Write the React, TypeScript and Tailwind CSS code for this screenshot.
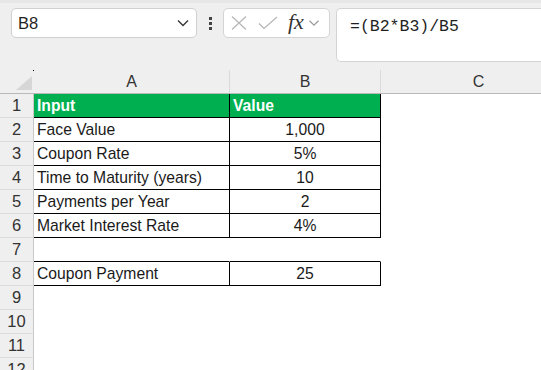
import React from "react";

const rows: { a: string; b: string; kind: "head" | "body" | "empty" | "none" }[] = [
  { a: "Input", b: "Value", kind: "head" },
  { a: "Face Value", b: "1,000", kind: "body" },
  { a: "Coupon Rate", b: "5%", kind: "body" },
  { a: "Time to Maturity (years)", b: "10", kind: "body" },
  { a: "Payments per Year", b: "2", kind: "body" },
  { a: "Market Interest Rate", b: "4%", kind: "body" },
  { a: "", b: "", kind: "empty" },
  { a: "Coupon Payment", b: "25", kind: "body" },
  { a: "", b: "", kind: "none" },
  { a: "", b: "", kind: "none" },
  { a: "", b: "", kind: "none" },
  { a: "", b: "", kind: "none" },
];

function Chevron({ className = "" }: { className?: string }) {
  return (
    <svg width="12" height="8" viewBox="0 0 12 8" className={className}>
      <path d="M1 1.5 L6 6.5 L11 1.5" fill="none" stroke="currentColor" strokeWidth="1.3" />
    </svg>
  );
}

export default function App() {
  return (
    <div
      className="w-[541px] h-[370px] overflow-hidden bg-white text-[#1a1a1a]"
      style={{ fontFamily: '"Liberation Sans", Arial, sans-serif' }}
    >
      {/* toolbar */}
      <div className="h-[70px] bg-[#efefef] border-t-[3px] border-[#e7e7e7] pt-[5px] flex items-start">
        <div className="ml-[11px] w-[186px] h-[30px] bg-white border border-[#d0d0d0] rounded-[5px] flex items-center pl-[6px] pr-[7px]">
          <span className="text-[16.5px] text-[#1f1f1f] flex-1">B8</span>
          <Chevron className="text-[#333]" />
        </div>
        <div className="w-[26px] h-[30px] flex flex-col items-center justify-center gap-[2px]">
          <div className="w-[3px] h-[3px] bg-[#444]" />
          <div className="w-[3px] h-[3px] bg-[#444]" />
          <div className="w-[3px] h-[3px] bg-[#444]" />
        </div>
        <div className="w-[107px] h-[30px] bg-white border border-[#d4d4d4] rounded-[5px] flex items-center pl-[6px]">
          <svg width="18" height="16" viewBox="0 0 18 16">
            <path d="M2 1.5 L16 14.5 M16 1.5 L2 14.5" stroke="#b5b5b5" strokeWidth="1.2" fill="none" />
          </svg>
          <svg width="22" height="16" viewBox="0 0 22 16" className="ml-[9px]">
            <path d="M2 8.5 L7 13.5 L20 2" stroke="#b5b5b5" strokeWidth="1.2" fill="none" />
          </svg>
          <span
            className="ml-[9px] text-[22px] italic text-[#333] leading-none mb-[2px]"
            style={{ fontFamily: '"Liberation Serif", "Times New Roman", serif' }}
          >
            fx
          </span>
          <Chevron className="ml-[4px] text-[#9a9a9a] scale-90" />
        </div>
        <div className="ml-[6px] flex-1 h-[54px] bg-white border border-[#d4d4d4] border-r-0 rounded-l-[5px] pl-[13px] pt-[5px]">
          <span
            className="text-[16.5px] text-[#1f1f1f]"
            style={{ fontFamily: '"Liberation Mono", "DejaVu Sans Mono", monospace' }}
          >
            =(B2*B3)/B5
          </span>
        </div>
      </div>

      {/* column headers */}
      <div className="h-[24px] flex bg-[#efefef] border-b border-[#b9b9b9] text-[16px] text-[#333] overflow-hidden">
        <div className="w-[34px] shrink-0 relative">
          <div className="absolute right-[2px] bottom-[3px] w-0 h-0 border-l-[16px] border-l-transparent border-b-[14px] border-b-[#d6d6d6]" />
          <div className="absolute right-0 top-0 w-[1px] h-[1px] bg-black" />
        </div>
        <div className="w-[196px] shrink-0 border-r border-[#dadada] flex items-center justify-center">A</div>
        <div className="w-[151px] shrink-0 border-r border-[#dadada] flex items-center justify-center">B</div>
        <div className="w-[195px] shrink-0 flex items-center justify-center">C</div>
      </div>

      {/* rows */}
      {rows.map((r, i) => {
        const boxed = r.kind === "head" || r.kind === "body";
        const bottom = r.kind !== "none";
        const side = boxed ? "border-r-black" : "border-r-transparent";
        const bot = bottom ? "border-b-black" : "border-b-transparent";
        const head = r.kind === "head";
        return (
          <div key={i} className="h-[24px] flex text-[15.7px]">
            <div className="w-[34px] shrink-0 bg-[#efefef] border-r border-b border-r-[#c8c8c8] border-b-[#dcdcdc] flex items-center justify-center text-[#333] text-[16.5px]">
              {i + 1}
            </div>
            <div
              className={`w-[196px] shrink-0 border-r border-b ${side} ${bot} flex items-center pl-[3px] ${
                head ? "bg-[#00b050] text-white font-bold" : ""
              }`}
            >
              {r.a}
            </div>
            <div
              className={`w-[151px] shrink-0 border-r border-b ${side} ${bot} flex items-center ${
                head ? "bg-[#00b050] text-white font-bold pl-[3px]" : "justify-center"
              }`}
            >
              {r.b}
            </div>
            <div className="flex-1" />
          </div>
        );
      })}
    </div>
  );
}
